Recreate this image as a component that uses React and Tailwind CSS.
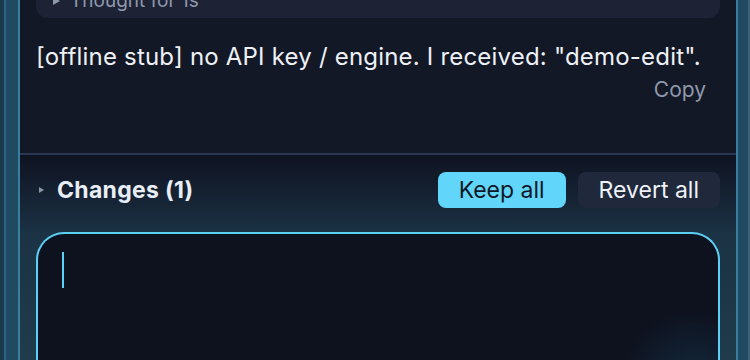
import React from 'react';

const Caret = ({ className }) => (
  <svg width="7" height="8" viewBox="0 0 7 8" className={className}>
    <polygon points="0,0 7,4 0,8" fill="currentColor" />
  </svg>
);

const App = () => {
  return (
    <div className="flex w-[750px] h-[360px] overflow-hidden bg-[#131826] font-['Inter',sans-serif]">
      {/* left frame */}
      <div className="flex h-full shrink-0">
        <div className="w-[4px] bg-[#1b3a4c]" />
        <div className="w-[2px] bg-[#2b6585]" />
        <div className="w-[12px] bg-[#1f4a62]" />
        <div className="w-[2px] bg-[#3a7f9e]" />
      </div>

      {/* panel */}
      <div className="flex-1 flex flex-col min-w-0">
        {/* message */}
        <div className="h-[153px] px-4 bg-[#131826] flex flex-col">
          <div className="-mt-[32px] h-[50px] rounded-[12px] bg-[#1d2335] flex items-end pb-[5px] pl-[17px] gap-[10px] text-[#8f98ab] text-[19px] leading-[24px]">
            <Caret className="mb-[8px]" />
            <span>Thought for 1s</span>
          </div>
          <p className="mt-[24px] text-[24px] leading-[30px] tracking-[0.2px] text-[#eef1f6] whitespace-nowrap">
            [offline stub] no API key / engine. I received: "demo-edit".
          </p>
          <div className="flex justify-end pr-[14px] mt-[5px]">
            <button className="text-[21px] leading-[26px] text-[#8f98ab]">Copy</button>
          </div>
        </div>
        <div className="h-[2px] bg-[#2c3752]" />

        {/* changes header */}
        <div className="flex items-center justify-between pl-[18px] pr-4 pt-[17px] pb-[24px] bg-gradient-to-b from-[#0f1322] to-[#1a3143]">
          <div className="flex items-center gap-[12px]">
            <Caret className="text-[#8b95a8] scale-75" />
            <span className="text-[23px] tracking-[0.3px] font-bold text-[#e8eef6]">Changes (1)</span>
          </div>
          <div className="flex gap-[12px]">
            <button className="h-[36px] px-[21px] rounded-[8px] bg-[#61d6fa] text-[#0f1726] text-[23px]">Keep all</button>
            <button className="h-[36px] px-[21px] rounded-[8px] bg-[#1f293b] text-[#eef1f6] text-[23px]">Revert all</button>
          </div>
        </div>

        {/* composer */}
        <div className="flex-1 px-4 bg-gradient-to-b from-[#1b3344] to-[#1f3b4c]">
          <div className="h-full rounded-t-[28px] border-2 border-b-0 border-[#5ccff5] bg-[radial-gradient(75px_circle_at_655px_150px,#132a3e_0%,#0e111e_100%)] pt-[18px] pl-[24px]">
            <div className="w-[2px] h-[36px] bg-[#5ccff5]" />
          </div>
        </div>
      </div>

      {/* right frame */}
      <div className="flex h-full shrink-0">
        <div className="w-[2px] bg-[#3a7f9e]" />
        <div className="w-[10px] bg-[#1f4a62]" />
        <div className="w-[2px] bg-[#3f6176]" />
      </div>
    </div>
  );
};

export default App;
